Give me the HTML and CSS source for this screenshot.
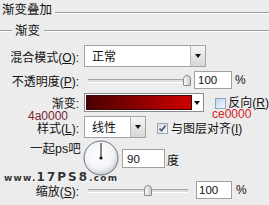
FILE: index.html
```html
<!DOCTYPE html>
<html>
<head>
<meta charset="utf-8">
<link rel="stylesheet" href="styles.css">
</head>
<body>
<div class="panel">
  <div class="title"><span class="title-text">渐变叠加</span><i class="rule"></i></div>
  <div class="group"><i class="rule short"></i><span class="group-text">渐变</span><i class="rule"></i></div>

  <div class="row r1">
    <span class="lbl">混合模式(<u>O</u>):</span>
    <div class="select w-blend"><span class="val">正常</span><span class="btn"><i class="tri"></i></span></div>
  </div>

  <div class="row r2">
    <span class="lbl">不透明度(<u>P</u>):</span>
    <div class="slider s-op"><div class="track"></div><div class="thumb" style="left: 99px"></div></div>
    <div class="input i-op">100</div>
    <span class="unit u-op">%</span>
  </div>

  <div class="row r3">
    <span class="lbl">渐变:</span>
    <div class="gradbox"><div class="grad"></div><span class="gbtn"><i class="tri"></i></span></div>
    <span class="check c-rev"></span>
    <span class="ctext t-rev">反向(<u>R</u>)</span>
  </div>

  <div class="row r4">
    <span class="lbl l-style">样式(<u>L</u>):</span>
    <div class="select w-style"><span class="val">线性</span><span class="btn"><i class="tri"></i></span></div>
    <span class="check checked c-align"><svg width="9" height="9" viewBox="0 0 9 9"><path d="M1.5 4.5 L3.5 6.8 L7.6 1.6" fill="none" stroke="#4a5a78" stroke-width="1.6"/></svg></span>
    <span class="ctext t-align">与图层对齐(<u>I</u>)</span>
  </div>

  <div class="row r5">
    <span class="lbl"></span>
    <svg class="dial" width="36" height="36" viewBox="0 0 36 36">
      <defs>
        <radialGradient id="dg" cx="45%" cy="40%" r="60%">
          <stop offset="0" stop-color="#ffffff"/>
          <stop offset="0.7" stop-color="#f2f3f6"/>
          <stop offset="1" stop-color="#c9ccd6"/>
        </radialGradient>
      </defs>
      <circle cx="18" cy="18" r="17" fill="url(#dg)" stroke="#6c7080" stroke-width="1"/>
      <line x1="18" y1="18" x2="18" y2="3" stroke="#111" stroke-width="1"/>
      <circle cx="18" cy="18" r="1.6" fill="#111"/>
    </svg>
    <div class="input i-ang">90</div>
    <span class="unit u-ang">度</span>
  </div>

  <div class="row r6">
    <span class="lbl">缩放(<u>S</u>):</span>
    <div class="slider s-sc"><div class="track"></div><div class="thumb" style="left: 60px"></div></div>
    <div class="input i-sc">100</div>
    <span class="unit u-sc">%</span>
  </div>

  <span class="note n-dark">4a0000</span>
  <span class="note n-light">ce0000</span>

  <span class="wm wm1">一起ps吧</span>
  <span class="wm wm2"><b class="s">www.</b><b class="b">17PS8</b><b class="s">.com</b></span>
</div>
</body>
</html>
```
FILE: styles.css
```css
html, body {
  margin: 0;
  padding: 0;
  background: #ececec;
}
.panel {
  position: relative;
  width: 269px;
  height: 205px;
  overflow: hidden;
  background: #ececec;
  color: #111;
  font-family: "Liberation Sans", "Noto Sans CJK SC", sans-serif;
  font-size: 12px;
}
.title {
  display: flex;
  height: 20px;
  padding-left: 2px;
}
.title-text {
  font-size: 12.5px;
  line-height: 20px;
}
.rule {
  display: block;
  flex: 1;
  height: 0;
  border-top: 1px solid #9c9c9c;
  border-bottom: 1px solid #ffffff;
}
.title .rule {
  margin-top: 12px;
  margin-left: 3px;
}
.group {
  display: flex;
  height: 20px;
}
.group .rule {
  margin-top: 10px;
}
.group .rule.short {
  flex: none;
  width: 12px;
}
.group-text {
  font-size: 12.5px;
  line-height: 22px;
  margin: 0 4px 0 3px;
}
.row {
  display: flex;
  align-items: center;
}
.lbl {
  width: 79px;
  margin-right: 5px;
  text-align: right;
  white-space: nowrap;
  padding-top: 3px;
  flex: none;
  line-height: 14px;
}
.l-style { line-height: 12px; padding-top: 4px; }
u { text-decoration: underline; }
.r1 { margin-top: 5px; height: 22px; }
.r2 { margin-top: 4px; height: 18px; }
.r3 { margin-top: 4px; height: 19px; }
.r4 { margin-top: 4px; height: 22px; }
.r5 { margin-top: 3px; height: 35px; }
.r6 { margin-top: 5px; height: 18px; }

.select {
  box-sizing: border-box;
  height: 22px;
  display: flex;
  background: #fff;
  border: 1px solid #a3a3a3;
}
.w-blend { width: 122px; }
.w-style { width: 62px; }
.select .val {
  flex: 1;
  padding-left: 7px;
  line-height: 20px;
  padding-top: 1px;
}
.select .btn {
  width: 14px;
  border-left: 1px solid #b8b8b8;
  background: linear-gradient(#f6f6f6, #d6d6d6);
  display: flex;
  align-items: center;
  justify-content: center;
}
.tri {
  display: block;
  width: 0;
  height: 0;
  border-left: 3px solid transparent;
  border-right: 3px solid transparent;
  border-top: 4px solid #111;
}
.slider {
  position: relative;
  height: 18px;
  display: flex;
  align-items: center;
}
.s-op { width: 108px; }
.s-sc { width: 110px; }
.track {
  box-sizing: border-box;
  height: 4px;
  flex: 1;
  margin: 2px 6px 0 4px;
  border-top: 1px solid #a5a5a5;
  border-bottom: 1px solid #ffffff;
  background: #dedede;
}
.thumb {
  position: absolute;
  top: 4px;
  box-sizing: border-box;
  width: 8px;
  height: 11px;
  border: 1px solid #8a8a8a;
  border-radius: 4px 4px 1px 1px;
  background: linear-gradient(90deg, #f8f8f8, #cfcfcf);
}
.input {
  box-sizing: border-box;
  background: #fff;
  border: 1px solid #a0a0a0;
  font-size: 11.5px;
  padding-left: 3px;
  display: flex;
  align-items: center;
}
.i-op { width: 38px; height: 18px; margin-left: 2px; }
.i-sc { width: 36px; height: 18px; margin-left: 2px; padding-left: 2px; }
.i-ang { width: 43px; height: 19px; margin-left: 3px; padding-left: 4px; }
.unit { font-size: 12px; }
.u-op { margin-left: 3px; }
.u-sc { margin-left: 4px; }
.u-ang { margin-left: 2px; padding-top: 2px; }

.gradbox {
  box-sizing: border-box;
  width: 122px;
  height: 19px;
  display: flex;
  background: #fff;
  border: 1px solid #8c8c8c;
  padding: 1px;
}
.grad {
  flex: 1;
  border: 1px solid #3a0a0a;
  background: linear-gradient(90deg, #4a0000, #ce0000);
}
.gbtn {
  width: 10px;
  display: flex;
  align-items: center;
  justify-content: center;
}
.check {
  box-sizing: border-box;
  width: 11px;
  height: 11px;
  border: 1px solid #8ea6c2;
  background: linear-gradient(135deg, #bcd4ee, #f6f9fd);
  flex: none;
  display: flex;
  align-items: center;
  justify-content: center;
}
.c-rev { margin-left: 11px; margin-top: 1px; }
.c-align { margin-left: 11px; margin-top: 2px; background: linear-gradient(135deg, #d6dde8, #f4f6f9); border-color: #9aa4b4; }
.ctext { white-space: nowrap; line-height: 12px; }
.t-rev { margin-left: 2px; padding-top: 0; }
.t-align { margin-left: 3px; padding-top: 3px; line-height: 14px; }
.dial { display: block; margin-left: -1px; margin-top: -1px; flex: none; }

.note {
  position: absolute;
  font-size: 12px;
  line-height: 9px;
}
.n-dark { left: 28px; top: 112px; color: #7a2232; }
.n-light { left: 212px; top: 110px; color: #d02020; }

.wm {
  position: absolute;
  white-space: nowrap;
}
.wm1 {
  left: 30px;
  top: 141px;
  font-size: 12.5px;
  line-height: 16px;
  color: #222;
}
.wm2 {
  left: 4px;
  top: 171px;
  line-height: 12px;
  font-family: "DejaVu Sans", sans-serif;
  color: #333;
  text-shadow: 1px 1px 0 #fff;
}
.wm2 b { font-weight: bold; }
.wm2 .s { font-size: 9px; letter-spacing: 1.2px; }
.wm2 .b { font-size: 12px; letter-spacing: 2px; }
```
